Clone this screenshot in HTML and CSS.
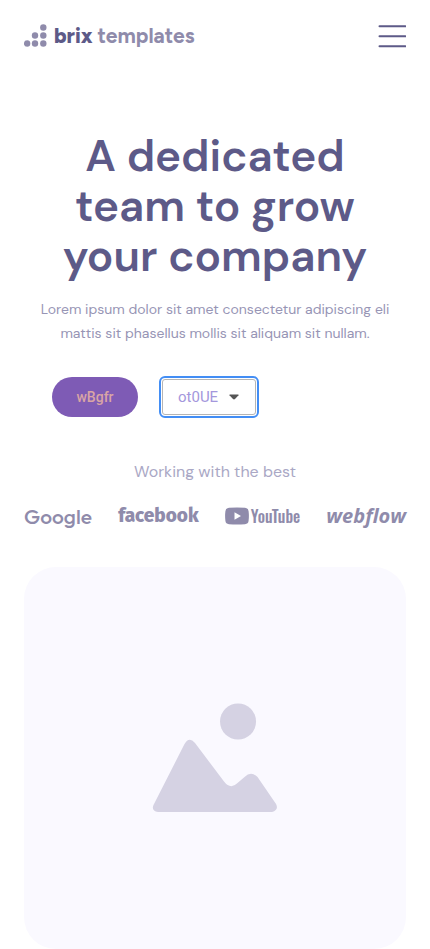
FILE: index.html
```html
<!DOCTYPE html>
<html lang="en">
<head>
<meta charset="utf-8">
<meta name="viewport" content="width=device-width, initial-scale=1">
<title>Brix Templates</title>
<link rel="stylesheet" href="styles.css">
</head>
<body>
<header class="header">
  <a class="brand" href="#">
    <svg class="brand-mark" viewBox="0 0 24 24" width="24" height="24" fill="currentColor" aria-hidden="true">
      <circle cx="19.3" cy="3.5" r="3.2"/>
      <circle cx="11" cy="11.5" r="3.2"/><circle cx="19.3" cy="11.5" r="3.2"/>
      <circle cx="3.1" cy="19.5" r="3.2"/><circle cx="11" cy="19.5" r="3.2"/><circle cx="19.3" cy="19.5" r="3.2"/>
    </svg>
    <span class="brand-name"><strong>brix</strong> templates</span>
  </a>
  <button class="menu" type="button" aria-label="Menu">
    <svg viewBox="0 0 28 24" width="28" height="24" stroke="currentColor" stroke-width="2" stroke-linecap="round" aria-hidden="true">
      <path d="M1.5 2.3h26M1.5 12.3h26M1.5 22.3h26"/>
    </svg>
  </button>
</header>
<main class="main">
  <section class="hero">
    <h1 class="title">A dedicated<br>team to grow<br>your company</h1>
    <p class="lead">Lorem ipsum dolor sit amet consectetur adipiscing eli<br>mattis sit phasellus mollis sit aliquam sit nullam.</p>
    <div class="actions">
      <button class="primary" type="button">wBgfr</button>
      <div class="picker">
        <select class="picker-select" aria-label="Option"><option>ot0UE</option></select>
        <svg class="picker-arrow" viewBox="0 0 10 6" width="10" height="6" fill="currentColor" aria-hidden="true"><path d="M1 .5h8q1 0 .5.8L6 5q-1 .8-2 0L.5 1.3Q0 .5 1 .5z"/></svg>
      </div>
    </div>
  </section>
  <section class="partners">
    <h2 class="partners-title">Working with the best</h2>
    <ul class="logos">
      <li class="logo google">Google</li>
      <li class="logo facebook">facebook</li>
      <li class="logo youtube">
        <svg viewBox="0 0 24 18" width="24" height="18" aria-hidden="true"><path fill="currentColor" fill-rule="evenodd" d="M4 .8Q12 0 20 .8Q23.300 1 23.600 4.200Q24.200 9 23.600 13.800Q23.300 17 20 17.200Q12 18 4 17.200Q.7 17 .4 13.800Q-.2 9 .4 4.200Q.7 1 4 .8zM9.500 5.300V12.700L16 9z"/></svg>
        <span>YouTube</span>
      </li>
      <li class="logo webflow">webflow</li>
    </ul>
  </section>
  <div class="media">
    <svg class="media-icon" viewBox="0 0 126 110" fill="currentColor" role="img" aria-label="Image placeholder">
      <circle cx="86" cy="18.500" r="18"/>
      <path d="M1.500 102 32.500 41Q37 33 43 40L72 78.500Q78.500 87 85.500 80L92.500 74Q99 67.500 105.500 74L124 101Q127 107 120 109H6Q-1 108 1.500 102z"/>
    </svg>
  </div>
</main>
</body>
</html>
```
FILE: styles.css
```css
:root {
  --ink: #5d5a88;
  --soft: #8f8bab;
  --muted: #9795b5;
}
* { box-sizing: border-box; }
body {
  margin: 0;
  background: #fff;
  color: var(--ink);
  font-family: "DM Sans", Inter, "Liberation Sans", sans-serif;
}
.header {
  display: flex;
  align-items: center;
  justify-content: space-between;
  padding: 24px;
}
.brand {
  display: flex;
  align-items: center;
  gap: 6px;
  color: var(--soft);
  text-decoration: none;
}
.brand-mark, .menu svg { display: block; }
.brand-name {
  font-family: Figtree, Lato, sans-serif;
  font-size: 21px;
  font-weight: 700;
  line-height: 24px;
}
.brand-name strong { color: var(--ink); font-weight: 800; }
.menu {
  padding: 0;
  border: 0;
  background: none;
  color: var(--ink);
}
.main { padding: 59px 24px 0; }
.hero { text-align: center; }
.title {
  margin: 0;
  font-size: 44px;
  font-weight: 650;
  line-height: 50px;
}
.lead {
  margin: 16px 0 32px;
  color: var(--muted);
  font-size: 14px;
  line-height: 24px;
  white-space: nowrap;
}
.actions {
  display: flex;
  align-items: center;
  gap: 24px;
  padding-left: 28px;
}
.primary {
  min-width: 86px;
  height: 40px;
  padding: 0 24px;
  border: 0;
  border-radius: 20px;
  background: #7e5bb5;
  color: #d9a5a5;
  font: 500 14px Roboto, sans-serif;
}
.picker { position: relative; }
.picker-select {
  display: block;
  width: 94px;
  height: 36px;
  padding: 0 15px;
  appearance: none;
  border: 1px solid #b5b5b5;
  border-radius: 3px;
  outline: 2px solid #438ef5;
  outline-offset: 1px;
  background: #fff;
  color: #a497dc;
  font: 400 15px Roboto, sans-serif;
}
.picker-arrow {
  position: absolute;
  top: 15px;
  right: 17px;
  color: #555;
  pointer-events: none;
}
.partners { margin-top: 43px; }
.partners-title {
  margin: 0 0 16px;
  color: #aaa8c5;
  font-size: 16px;
  font-weight: 400;
  line-height: 24px;
  text-align: center;
}
.logos {
  display: flex;
  align-items: center;
  justify-content: space-between;
  margin: 0;
  padding: 0;
  list-style: none;
}
.logo {
  color: var(--soft);
  line-height: 32px;
}
.google { font-family: Outfit, Inter, sans-serif; font-size: 21px; font-weight: 500; }
.facebook { font-family: "Fira Sans", "Noto Sans", sans-serif; font-size: 19px; font-weight: 800; }
.youtube {
  display: flex;
  align-items: center;
  gap: 2px;
  font-family: Oswald, "Roboto Condensed", Roboto, sans-serif;
  font-size: 16px;
  font-weight: 500;
}
.webflow { font-family: "Open Sans", sans-serif; font-size: 20px; font-style: italic; font-weight: 700; }
.media {
  display: grid;
  place-items: center;
  aspect-ratio: 1;
  margin-top: 35px;
  border-radius: 32px;
  background: #faf9ff;
  color: #d5d2e3;
}
.media-icon { width: 33%; }
```
